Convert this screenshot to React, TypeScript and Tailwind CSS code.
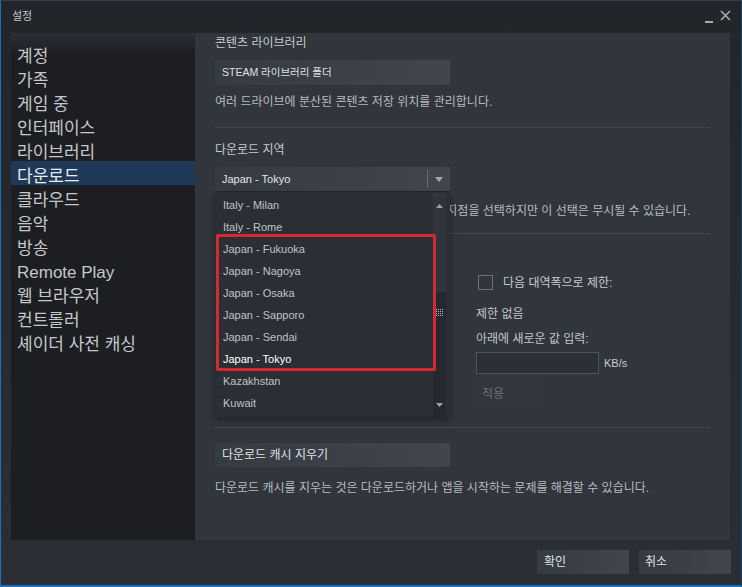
import React from "react";

const menu = [
  "계정",
  "가족",
  "게임 중",
  "인터페이스",
  "라이브러리",
  "다운로드",
  "클라우드",
  "음악",
  "방송",
  "Remote Play",
  "웹 브라우저",
  "컨트롤러",
  "셰이더 사전 캐싱",
];

const regions = [
  "Italy - Milan",
  "Italy - Rome",
  "Japan - Fukuoka",
  "Japan - Nagoya",
  "Japan - Osaka",
  "Japan - Sapporo",
  "Japan - Sendai",
  "Japan - Tokyo",
  "Kazakhstan",
  "Kuwait",
];

function Grip() {
  const dots = [];
  for (let r = 0; r < 4; r++) {
    for (let c = 0; c < 4; c++) {
      dots.push(<rect key={`${r}-${c}`} x={c * 2} y={r * 2} width="1" height="1" fill="#b5b9bf" />);
    }
  }
  return (
    <svg width="7" height="7" viewBox="0 0 7 7">
      {dots}
    </svg>
  );
}

function RegionDropdown() {
  return (
    <div className="relative mt-[9px] w-[235px] h-[25px]">
      <div className="flex items-center h-full bg-[linear-gradient(to_right,#363a41,#41454d)] border-b border-[#25282d]">
        <span className="flex-1 pl-[7px] text-[11px] text-[#e4e6e9]">Japan - Tokyo</span>
        <span className="w-px h-[18px] bg-[#656a72]" />
        <svg className="mx-[7px]" width="8" height="5" viewBox="0 0 8 5">
          <path d="M0 0h8L4 5z" fill="#a3a7ad" />
        </svg>
      </div>

      {/* open list */}
      <div className="absolute left-0 top-[26px] z-10 flex w-[235px] h-[224px] bg-[#2b2e34] shadow-[0_2px_6px_rgba(0,0,0,0.4)]">
        <div className="flex-1 pt-px">
          {regions.map((r) => (
            <div
              key={r}
              className={`h-[22px] leading-[22px] pl-[8px] text-[11px] ${
                r === "Japan - Tokyo" ? "text-white" : "text-[#bfc3c8]"
              }`}
            >
              {r}
            </div>
          ))}
        </div>
        <div className="flex flex-col w-[13px] mr-[4px]">
          <div className="flex flex-col items-center h-[99px] bg-[#30343b] pt-[11px]">
            <svg width="7" height="4" viewBox="0 0 7 4">
              <path d="M0 4h7L3.5 0z" fill="#9ca1a8" />
            </svg>
          </div>
          <div className="flex flex-col items-center flex-1 bg-[#25282d] pt-[17px]">
            <Grip />
            <div className="flex-1" />
            <svg className="mb-[10px]" width="7" height="4" viewBox="0 0 7 4">
              <path d="M0 0h7L3.5 4z" fill="#9ca1a8" />
            </svg>
          </div>
        </div>

        {/* highlight annotation */}
        <div className="absolute left-px top-[41px] w-[220px] h-[137px] border-[3px] border-[#d42a32] rounded-[2px]" />
      </div>
    </div>
  );
}

export default function App() {
  return (
    <div className="w-[742px] h-[587px] flex flex-col bg-[linear-gradient(to_bottom,#22252a,#2b2e34)] border-t border-t-[#3a3d44] border-l border-l-[#1d6fb8] border-r border-r-[#143f70] border-b-2 border-b-[#1d6fb8] font-['Liberation_Sans','Noto_Sans_CJK_KR',sans-serif] text-[12px] text-[#c3c6cb] select-none">
      {/* title bar */}
      <div className="flex items-center h-[32px] pl-[11px] pr-[10px]">
        <span className="flex-1 text-[11px] text-[#c4c7cc] pb-[1px]">설정</span>
        <span className="w-[8px] h-[2px] bg-[#a9acb1] mt-[9px] mr-[7px]" />
        <svg width="11" height="11" viewBox="0 0 11 11" className="mb-[4px]">
          <path d="M1 1l9 9M10 1l-9 9" stroke="#a9acb1" strokeWidth="1.6" />
        </svg>
      </div>

      {/* body */}
      <div className="flex h-[507px] pl-[10px] pr-[11px]">
        <nav className="w-[184px] pt-[8px] bg-[linear-gradient(to_bottom,#2b2f36_0px,#1c1e22_22px)]">
          {menu.map((m) => (
            <div
              key={m}
              className={`h-[24px] pt-[7px] leading-[17px] pl-[6px] text-[17px] ${
                m === "다운로드" ? "bg-[#1f3a58] text-[#e9ebed]" : "text-[#c5c8cc]"
              }`}
            >
              {m}
            </div>
          ))}
        </nav>

        <main className="flex-1 flex flex-col px-[20px] pt-[2px] bg-[#31353c]">
          <div className="leading-[16px] text-[#c8cbd0]">콘텐츠 라이브러리</div>
          <button className="mt-[9px] w-[235px] h-[25px] pl-[7px] text-left text-[10.5px] text-[#dfe1e4] bg-[linear-gradient(to_right,#363a41,#41454d)]">
            STEAM 라이브러리 폴더
          </button>
          <p className="mt-[9px] leading-[16px] text-[#b8bbc0]">여러 드라이브에 분산된 콘텐츠 저장 위치를 관리합니다.</p>

          <div className="mt-[17px] h-px bg-[#41454d]" />

          <div className="mt-[14px] leading-[16px] text-[#c8cbd0]">다운로드 지역</div>
          <RegionDropdown />
          {/* first half sits under the open list */}
          <p className="mt-[11px] leading-[16px] whitespace-nowrap text-[#b8bbc0]">
            <span className="invisible">Steam은 자동으로 가장 가까운 다운로드 서버 </span>
            지점을 선택하지만 이 선택은 무시될 수 있습니다.
          </p>

          <div className="mt-[14px] h-px bg-[#41454d]" />

          <div className="flex gap-[26px]">
            <div className="w-[235px]" />
            <div className="flex flex-col pt-[41px]">
              <label className="flex items-center gap-[10px] h-[15px]">
                <span className="ml-[2px] w-[15px] h-[15px] border border-[#6b6f77]" />
                <span className="text-[#c8cbd0]">다음 대역폭으로 제한:</span>
              </label>
              <div className="mt-[16px] leading-[16px] text-[#c3c6cb]">제한 없음</div>
              <div className="mt-[9px] leading-[16px] text-[#c3c6cb]">아래에 새로운 값 입력:</div>
              <div className="mt-[5px] flex items-center">
                <div className="w-[123px] h-[22px] border border-[#50545d] bg-[#2c2f35]" />
                <span className="ml-[5px] text-[11px] text-[#c8cbd0]">KB/s</span>
              </div>
              <button className="mt-[6px] w-[68px] h-[25px] pl-[6px] pt-[2px] text-left text-[#6c7078] bg-[#33363d]">
                적용
              </button>
            </div>
          </div>

          <div className="mt-[22px] h-px bg-[#41454d]" />

          <button className="mt-[15px] w-[235px] h-[24px] pl-[7px] text-left text-[#dfe1e4] bg-[linear-gradient(to_right,#363a41,#41454d)]">
            다운로드 캐시 지우기
          </button>
          <p className="mt-[13px] leading-[16px] text-[#b8bbc0]">
            다운로드 캐시를 지우는 것은 다운로드하거나 앱을 시작하는 문제를 해결할 수 있습니다.
          </p>
        </main>
      </div>

      {/* footer */}
      <div className="flex-1 flex justify-end items-start gap-[10px] pt-[10px] pr-[10px]">
        <button className="w-[92px] h-[24px] pl-[7px] text-left text-[#dfe1e4] bg-[linear-gradient(to_right,#363a41,#41454d)]">
          확인
        </button>
        <button className="w-[92px] h-[24px] pl-[6px] text-left text-[#dfe1e4] bg-[linear-gradient(to_right,#363a41,#41454d)]">
          취소
        </button>
      </div>
    </div>
  );
}
